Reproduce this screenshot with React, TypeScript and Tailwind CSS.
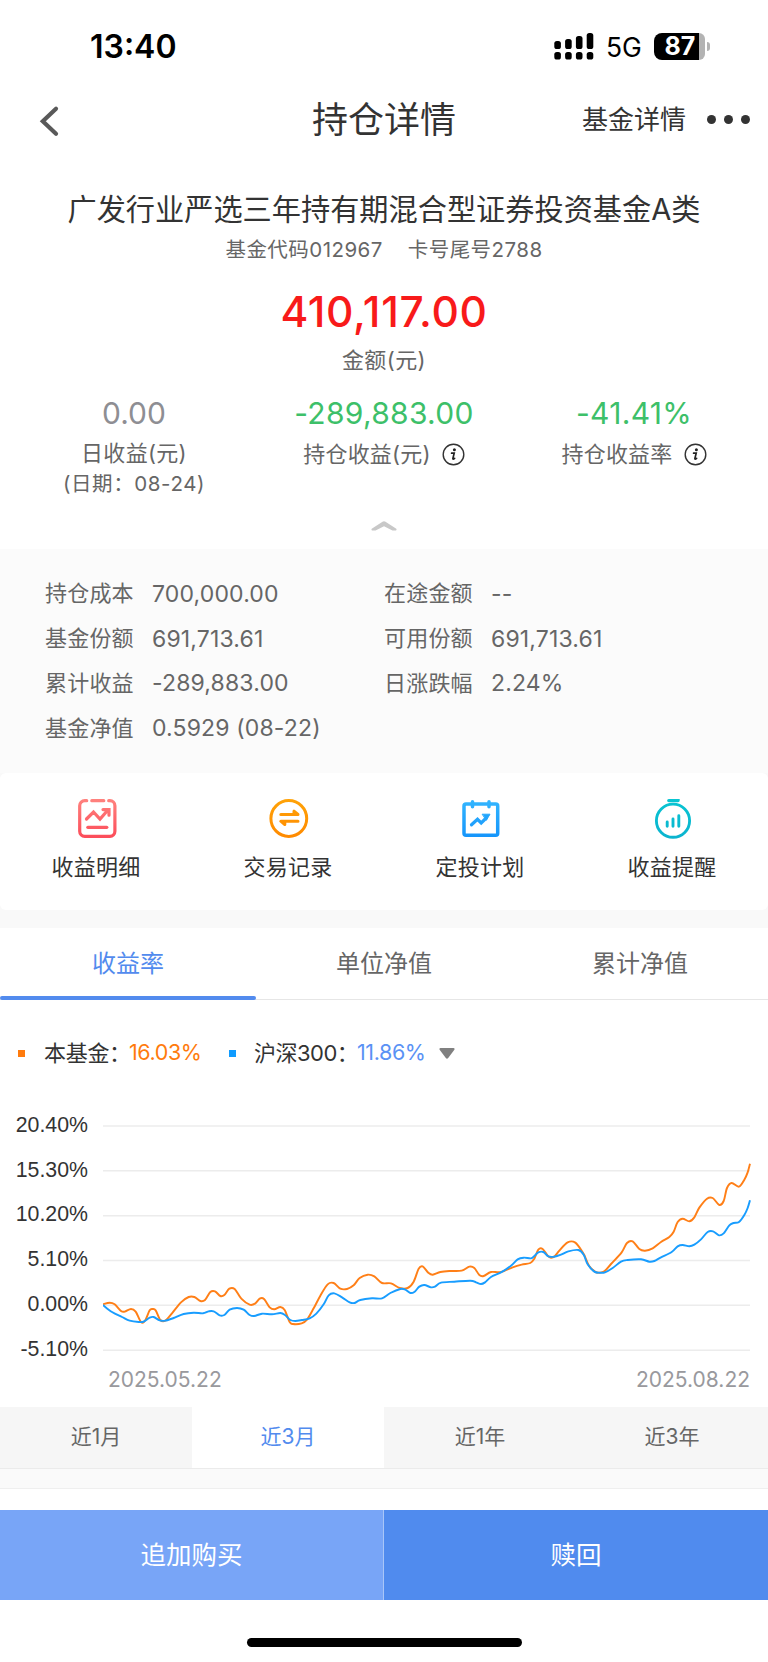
import type { ReactNode } from 'react'

type Point = [number, number]

const details = [
  { label: '持仓成本', value: '700,000.00' },
  { label: '在途金额', value: '--' },
  { label: '基金份额', value: '691,713.61' },
  { label: '可用份额', value: '691,713.61' },
  { label: '累计收益', value: '-289,883.00' },
  { label: '日涨跌幅', value: '2.24%' },
  { label: '基金净值', value: '0.5929 (08-22)' },
]

const axis = ['20.40%', '15.30%', '10.20%', '5.10%', '0.00%', '-5.10%']

const fundLine: Point[] = [
  [0, 583], [20, 578], [35, 583], [54, 603], [65, 605], [84, 597], [98, 605], [114, 636], [126, 632],
  [140, 601], [149, 597], [158, 601], [172, 630], [187, 632], [207, 610], [234, 577], [257, 561],
  [274, 561], [292, 573], [306, 570], [322, 546], [336, 544], [352, 558], [364, 555], [379, 536],
  [395, 537], [415, 566], [440, 584], [456, 581], [470, 566], [483, 567], [500, 592], [514, 598],
  [532, 591], [545, 600], [560, 636], [570, 642], [596, 640], [612, 629], [632, 595], [652, 557],
  [674, 523], [692, 519], [712, 536], [732, 537], [752, 526], [770, 504], [794, 494], [814, 499],
  [837, 519], [864, 520], [890, 534], [914, 534], [932, 515], [947, 476], [959, 469], [976, 488],
  [989, 494], [1012, 486], [1039, 483], [1076, 482], [1099, 470], [1114, 474], [1129, 495],
  [1142, 498], [1164, 486], [1194, 486], [1229, 472], [1256, 464], [1282, 459], [1294, 446],
  [1306, 419], [1319, 417], [1334, 437], [1344, 443], [1356, 438], [1369, 422], [1394, 397],
  [1417, 398], [1439, 427], [1446, 440], [1458, 467], [1476, 485], [1490, 488], [1504, 484],
  [1524, 462], [1556, 427], [1572, 399], [1589, 394], [1609, 417], [1626, 422], [1649, 415],
  [1674, 396], [1699, 381], [1712, 365], [1724, 336], [1739, 326], [1759, 334], [1774, 322],
  [1789, 293], [1812, 266], [1829, 264], [1849, 285], [1862, 273], [1872, 234], [1886, 219],
  [1908, 230], [1924, 209], [1934, 187], [1941, 161],
]

const indexLine: Point[] = [
  [0, 585], [27, 606], [57, 621], [80, 632], [107, 636], [122, 635], [140, 623], [152, 621],
  [170, 631], [187, 632], [212, 624], [242, 612], [272, 608], [300, 610], [317, 604], [332, 604],
  [350, 616], [364, 615], [380, 599], [402, 594], [422, 599], [440, 615], [454, 618], [477, 611],
  [507, 613], [532, 609], [546, 615], [562, 630], [577, 633], [597, 630], [620, 625], [640, 611],
  [662, 583], [677, 556], [694, 550], [717, 562], [740, 577], [754, 579], [772, 570], [807, 565],
  [837, 565], [862, 549], [892, 537], [907, 539], [922, 549], [935, 545], [949, 530], [964, 525],
  [984, 532], [996, 530], [1014, 518], [1054, 515], [1102, 512], [1119, 517], [1134, 522],
  [1146, 517], [1164, 501], [1194, 487], [1224, 467], [1244, 448], [1262, 443], [1284, 445],
  [1294, 438], [1306, 427], [1321, 426], [1336, 439], [1354, 440], [1374, 434], [1396, 424],
  [1426, 420], [1442, 434], [1454, 463], [1474, 485], [1490, 488], [1506, 487], [1529, 474],
  [1554, 455], [1574, 450], [1614, 448], [1639, 455], [1654, 453], [1674, 442], [1706, 426],
  [1724, 409], [1739, 405], [1759, 409], [1774, 404], [1794, 388], [1814, 366], [1830, 364],
  [1848, 376], [1862, 370], [1879, 346], [1892, 339], [1908, 336], [1924, 315], [1934, 294],
  [1941, 271],
]

// Catmull-Rom spline written as cubic beziers
function smooth(points: Point[]) {
  let d = `M${points[0][0]} ${points[0][1]}`
  for (let i = 0; i < points.length - 1; i++) {
    const p0 = points[i - 1] ?? points[i]
    const p1 = points[i]
    const p2 = points[i + 1]
    const p3 = points[i + 2] ?? p2
    d += `C${p1[0] + (p2[0] - p0[0]) / 6} ${p1[1] + (p2[1] - p0[1]) / 6} ${p2[0] - (p3[0] - p1[0]) / 6} ${p2[1] - (p3[1] - p1[1]) / 6} ${p2[0]} ${p2[1]}`
  }
  return d
}

function StatusBar() {
  return (
    <div className="h-[92px] pl-[90px] pr-[58px] flex items-center justify-between text-black">
      <span className="pt-[2px] text-[32px] leading-none font-semibold">13:40</span>
      <div className="flex items-center">
        <svg width="40" height="28" viewBox="0 0 40 28">
          {[9, 7, 4, 1].map((y, i) => (
            <g key={y}>
              <rect x={i * 10.8 + 0.3} y={y} width="6.6" height={17 - y} rx="2.6" />
              <rect x={i * 10.8 + 0.3} y="20" width="6.6" height="7.5" rx="2.6" />
            </g>
          ))}
        </svg>
        <span className="ml-[12px] mt-[2px] w-[48px] text-[26.5px] leading-[32px]">5G</span>
        <div className="flex h-[27px]">
          <div className="w-[45px] rounded-l-[8px] bg-black pl-[7px] text-center text-[25px] leading-[27px] font-bold text-white">
            87
          </div>
          <div className="w-[6px] rounded-r-[6px] bg-[#b3b3b3]" />
        </div>
        <div className="ml-[2px] w-[3px] h-[9px] rounded-r-full bg-[#b3b3b3]" />
      </div>
    </div>
  )
}

function NavBar() {
  return (
    <div className="relative h-[56px] flex items-center justify-center text-[#333]">
      <svg className="absolute left-[38px] top-[13px]" width="24" height="32" viewBox="0 0 24 32" fill="none">
        <path d="M18 3.8 4.8 16.3 18 28.8" stroke="#595959" strokeWidth="4.2" strokeLinecap="round" strokeLinejoin="miter" />
      </svg>
      <h1 className="text-[36px] leading-none">持仓详情</h1>
      <div className="absolute right-[18px] top-0 h-full flex items-center">
        <span className="text-[26px] leading-none">基金详情</span>
        <span className="ml-[21px] flex gap-[8px] -mt-[2px]">
          <i className="size-[9px] rounded-full bg-[#333]" />
          <i className="size-[9px] rounded-full bg-[#333]" />
          <i className="size-[9px] rounded-full bg-[#333]" />
        </span>
      </div>
    </div>
  )
}

function InfoIcon() {
  return (
    <svg width="23" height="23" viewBox="0 0 23 23" fill="none">
      <circle cx="11.5" cy="11.5" r="10.3" stroke="#333" strokeWidth="1.4" />
      <circle cx="12.4" cy="6.8" r="1.5" fill="#222" />
      <path d="M9.6 10.2h2.6l-1.3 5.2c-.2.9.5 1 1.7 0" stroke="#222" strokeWidth="1.7" strokeLinecap="round" />
    </svg>
  )
}

function Stat({ value, color, children }: { value: string; color: string; children: ReactNode }) {
  return (
    <div className="flex flex-col items-center">
      <div className={`h-[34px] flex items-center text-[30px] leading-none ${color}`}>{value}</div>
      {children}
    </div>
  )
}

function Summary() {
  return (
    <section className="h-[401px] pt-[42px] flex flex-col items-center text-[#666]">
      <h2 className="h-[40px] flex items-center text-[29.2px] leading-none text-[#333] whitespace-nowrap">
        广发行业严选三年持有期混合型证券投资基金A类
      </h2>
      <div className="mt-[8px] h-[24px] flex items-center gap-[25px] text-[20.5px] leading-none tracking-[0.45px]">
        <span>基金代码012967</span>
        <span>卡号尾号2788</span>
      </div>
      <div className="mt-[25px] h-[50px] flex items-center text-[42.5px] leading-none font-medium tracking-[0.65px] text-[#f81a1a]">
        410,117.00
      </div>
      <div className="mt-[9px] h-[28px] flex items-center text-[22px] leading-none tracking-[0.4px]">金额(元)</div>
      <div className="mt-[22px] w-full px-[9px] grid grid-cols-3">
        <Stat value="0.00" color="text-[#8e8e93]">
          <div className="mt-[10px] h-[26px] flex items-center text-[22px] leading-none tracking-[0.3px]">日收益(元)</div>
          <div className="mt-[5px] h-[26px] flex items-center text-[20.5px] leading-none tracking-[0.6px]">(日期：08-24)</div>
        </Stat>
        <Stat value="-289,883.00" color="text-[#3dc069] tracking-[0.3px]">
          <div className="mt-[10px] h-[28px] flex items-center gap-[11px] text-[22px] leading-none tracking-[0.2px]">
            持仓收益(元)
            <InfoIcon />
          </div>
        </Stat>
        <Stat value="-41.41%" color="text-[#3dc069] tracking-[0.3px]">
          <div className="mt-[10px] h-[28px] flex items-center gap-[11px] text-[22px] leading-none tracking-[0.2px]">
            持仓收益率
            <InfoIcon />
          </div>
        </Stat>
      </div>
      <svg className="mt-[24px]" width="26" height="10" viewBox="0 0 26 10">
        <path d="M11.5.8Q13-.4 14.5.8L25.3 7.8Q26 8.800 25 9.400H21.500L13 5.200 4.500 9.400H1Q0 8.800.7 7.800Z" fill="#c8c8c8" />
      </svg>
    </section>
  )
}

function Details() {
  return (
    <section className="h-[224px] pt-[22px] pl-[45px] bg-[#fbfbfb] text-[#666] grid grid-cols-[339px_1fr] auto-rows-[44.8px] content-start">
      {details.map((item) => (
        <div key={item.label} className="flex items-center text-[22px] leading-none">
          <span className="w-[107px] tracking-[0.2px]">{item.label}</span>
          <span className="pt-[2px] text-[23px] tracking-[0.15px]">{item.value}</span>
        </div>
      ))}
    </section>
  )
}

const actions = [
  {
    label: '收益明细',
    icon: (
      <g stroke="url(#red)" strokeWidth="3.2" strokeLinecap="round">
        <path d="M10.7 3.7H8.7a5 5 0 0 0-5 5V34.3a5 5 0 0 0 5 5h25.2a5 5 0 0 0 5-5V8.7a5 5 0 0 0-5-5h-1.2M15.8 3.7h12" />
        <path d="M10.5 22 17.5 15l6.5 7 7.5-8.5M27 12.6h6v5.6" />
        <path d="M11.8 30.3h19" />
      </g>
    ),
  },
  {
    label: '交易记录',
    icon: (
      <g stroke="url(#orange)" strokeWidth="3" strokeLinecap="round" strokeLinejoin="round">
        <circle cx="20.8" cy="21.5" r="17.9" />
        <path d="M12.8 17.5h17.2l-4-3.3v3M30 24.2h-17.200l4 3.300v-3" />
      </g>
    ),
  },
  {
    label: '定投计划',
    icon: (
      <g stroke="url(#blue)" strokeWidth="3.5" strokeLinecap="round">
        <rect x="4" y="7" width="33.7" height="31.3" rx="2" />
        <path d="M12.5 4.8v5M29 4.8v5" />
        <path d="M11.5 27.8 17.5 22.3l3.7 3.7 5-5" strokeWidth="3.2" />
        <path d="M22.5 17.2 30 17.2 26.5 23Z" fill="#20a5fd" strokeWidth="1" />
      </g>
    ),
  },
  {
    label: '收益提醒',
    icon: (
      <g stroke="url(#teal)" strokeWidth="2.9" strokeLinecap="round">
        <circle cx="21" cy="23.7" r="16.6" />
        <path d="M16.8 3.6h9.2v.01" strokeWidth="3.4" />
        <path d="M15.2 25v4.3M21 22v7.3M26.8 18.8v10.5" />
      </g>
    ),
  },
]

const gradients = [
  { id: 'red', from: '#ff8580', to: '#fc4d5a' },
  { id: 'orange', from: '#ffa408', to: '#ff8a00' },
  { id: 'blue', from: '#35b8ff', to: '#1595fb' },
  { id: 'teal', from: '#08c6d2', to: '#0bb4cf' },
]

function Actions() {
  return (
    <div className="h-[155px] bg-[#f9f9f9]">
      <svg className="absolute" width="0" height="0">
        <defs>
          {gradients.map((g) => (
            <linearGradient key={g.id} id={g.id} gradientUnits="userSpaceOnUse" x1="0" y1="0" x2="0" y2="40">
              <stop stopColor={g.from} />
              <stop offset="1" stopColor={g.to} />
            </linearGradient>
          ))}
        </defs>
      </svg>
      <section className="h-[137px] rounded-[6px] bg-white grid grid-cols-4">
        {actions.map((item) => (
          <div key={item.label} className="pt-[24px] flex flex-col items-center">
            <svg width="41" height="42" viewBox="0 0 41 42" fill="none">
              {item.icon}
            </svg>
            <span className="mt-[14px] h-[28px] flex items-center text-[22px] leading-none tracking-[0.2px] text-[#333]">
              {item.label}
            </span>
          </div>
        ))}
      </section>
    </div>
  )
}

function ChartTabs() {
  return (
    <div className="h-[72px] grid grid-cols-3 border-b border-[#e6e6e6] text-[24px] leading-none text-[#666]">
      <div className="relative flex items-center justify-center text-[#528bee]">
        收益率
        <div className="absolute inset-x-0 -bottom-px h-[4px] rounded-sm bg-[#528bee]" />
      </div>
      <div className="flex items-center justify-center">单位净值</div>
      <div className="flex items-center justify-center">累计净值</div>
    </div>
  )
}

function Chart() {
  return (
    <section className="h-[407px]">
      <div className="h-[106px] pl-[18px] flex items-center text-[22px] leading-none text-[#333] whitespace-nowrap">
        <i className="size-[7px] bg-[#ff7b0d]" />
        <span className="ml-[19px] w-[85px] tracking-[-0.3px]">本基金：</span>
        <span className="w-[100px] text-[21.5px] tracking-[-0.4px] text-[#ff7b0d]">16.03%</span>
        <i className="size-[7px] bg-[#0f9bff]" />
        <span className="ml-[18px] w-[103px] tracking-[-0.5px]">沪深300：</span>
        <span className="w-[82px] text-[21.5px] tracking-[-0.4px] text-[#5a92f5]">11.86%</span>
        <svg width="16" height="11" viewBox="0 0 16 11">
          <path d="M1.5 0h13q1.5.2.9 1.7L9.2 10q-1.2 1.3-2.4 0L.6 1.7Q0 .2 1.5 0Z" fill="#808080" />
        </svg>
      </div>
      <div className="flex h-[260px]">
        <div className="w-[88px] -mt-[3px] flex flex-col items-end font-['Liberation_Sans',sans-serif] text-[21.3px] leading-none text-[#333]">
          {axis.map((tick) => (
            <span key={tick} className="h-[44.8px] shrink-0 flex items-center">
              {tick}
            </span>
          ))}
        </div>
        <svg className="ml-[14.5px] mt-[4px]" width="648" height="260" viewBox="0 0 1944 780" fill="none">
          {axis.map((tick, i) => (
            <path key={tick} d={`M0 ${48 + i * 134.5}H1941`} stroke="#ececec" strokeWidth="4.5" />
          ))}
          <path d={smooth(fundLine)} stroke="#ff7f17" strokeWidth="5.8" strokeLinejoin="round" />
          <path d={smooth(indexLine)} stroke="#189dff" strokeWidth="5.8" strokeLinejoin="round" />
        </svg>
      </div>
      <div className="h-[26px] pl-[108px] pr-[18px] flex items-center justify-between text-[21px] leading-none text-[#99999d]">
        <span>2025.05.22</span>
        <span>2025.08.22</span>
      </div>
    </section>
  )
}

function Periods() {
  return (
    <div className="h-[82px] border-b border-[#efefef] bg-[#fafafa]">
      <div className="h-[62px] grid grid-cols-4 border-b border-[#ebebeb] bg-[#f6f6f6] text-[21px] leading-none text-[#666]">
        <div className="pb-[2px] flex items-center justify-center">近1月</div>
        <div className="pb-[2px] flex items-center justify-center bg-white text-[#528bee]">近3月</div>
        <div className="pb-[2px] flex items-center justify-center">近1年</div>
        <div className="pb-[2px] flex items-center justify-center">近3年</div>
      </div>
    </div>
  )
}

export default function App() {
  return (
    <div className="w-[768px] h-[1662px] overflow-hidden bg-white font-['Inter','Noto_Sans_CJK_SC',sans-serif]">
      <StatusBar />
      <NavBar />
      <Summary />
      <Details />
      <Actions />
      <ChartTabs />
      <Chart />
      <Periods />
      <div className="mt-[21px] h-[90px] flex text-[25.5px] leading-none text-white">
        <button className="w-[384px] border-r border-[#a9c6f8] bg-[#78a5f7]">追加购买</button>
        <button className="flex-1 bg-[#508bee]">赎回</button>
      </div>
      <div className="mt-[38px] mx-auto w-[275px] h-[9px] rounded-full bg-black" />
    </div>
  )
}
